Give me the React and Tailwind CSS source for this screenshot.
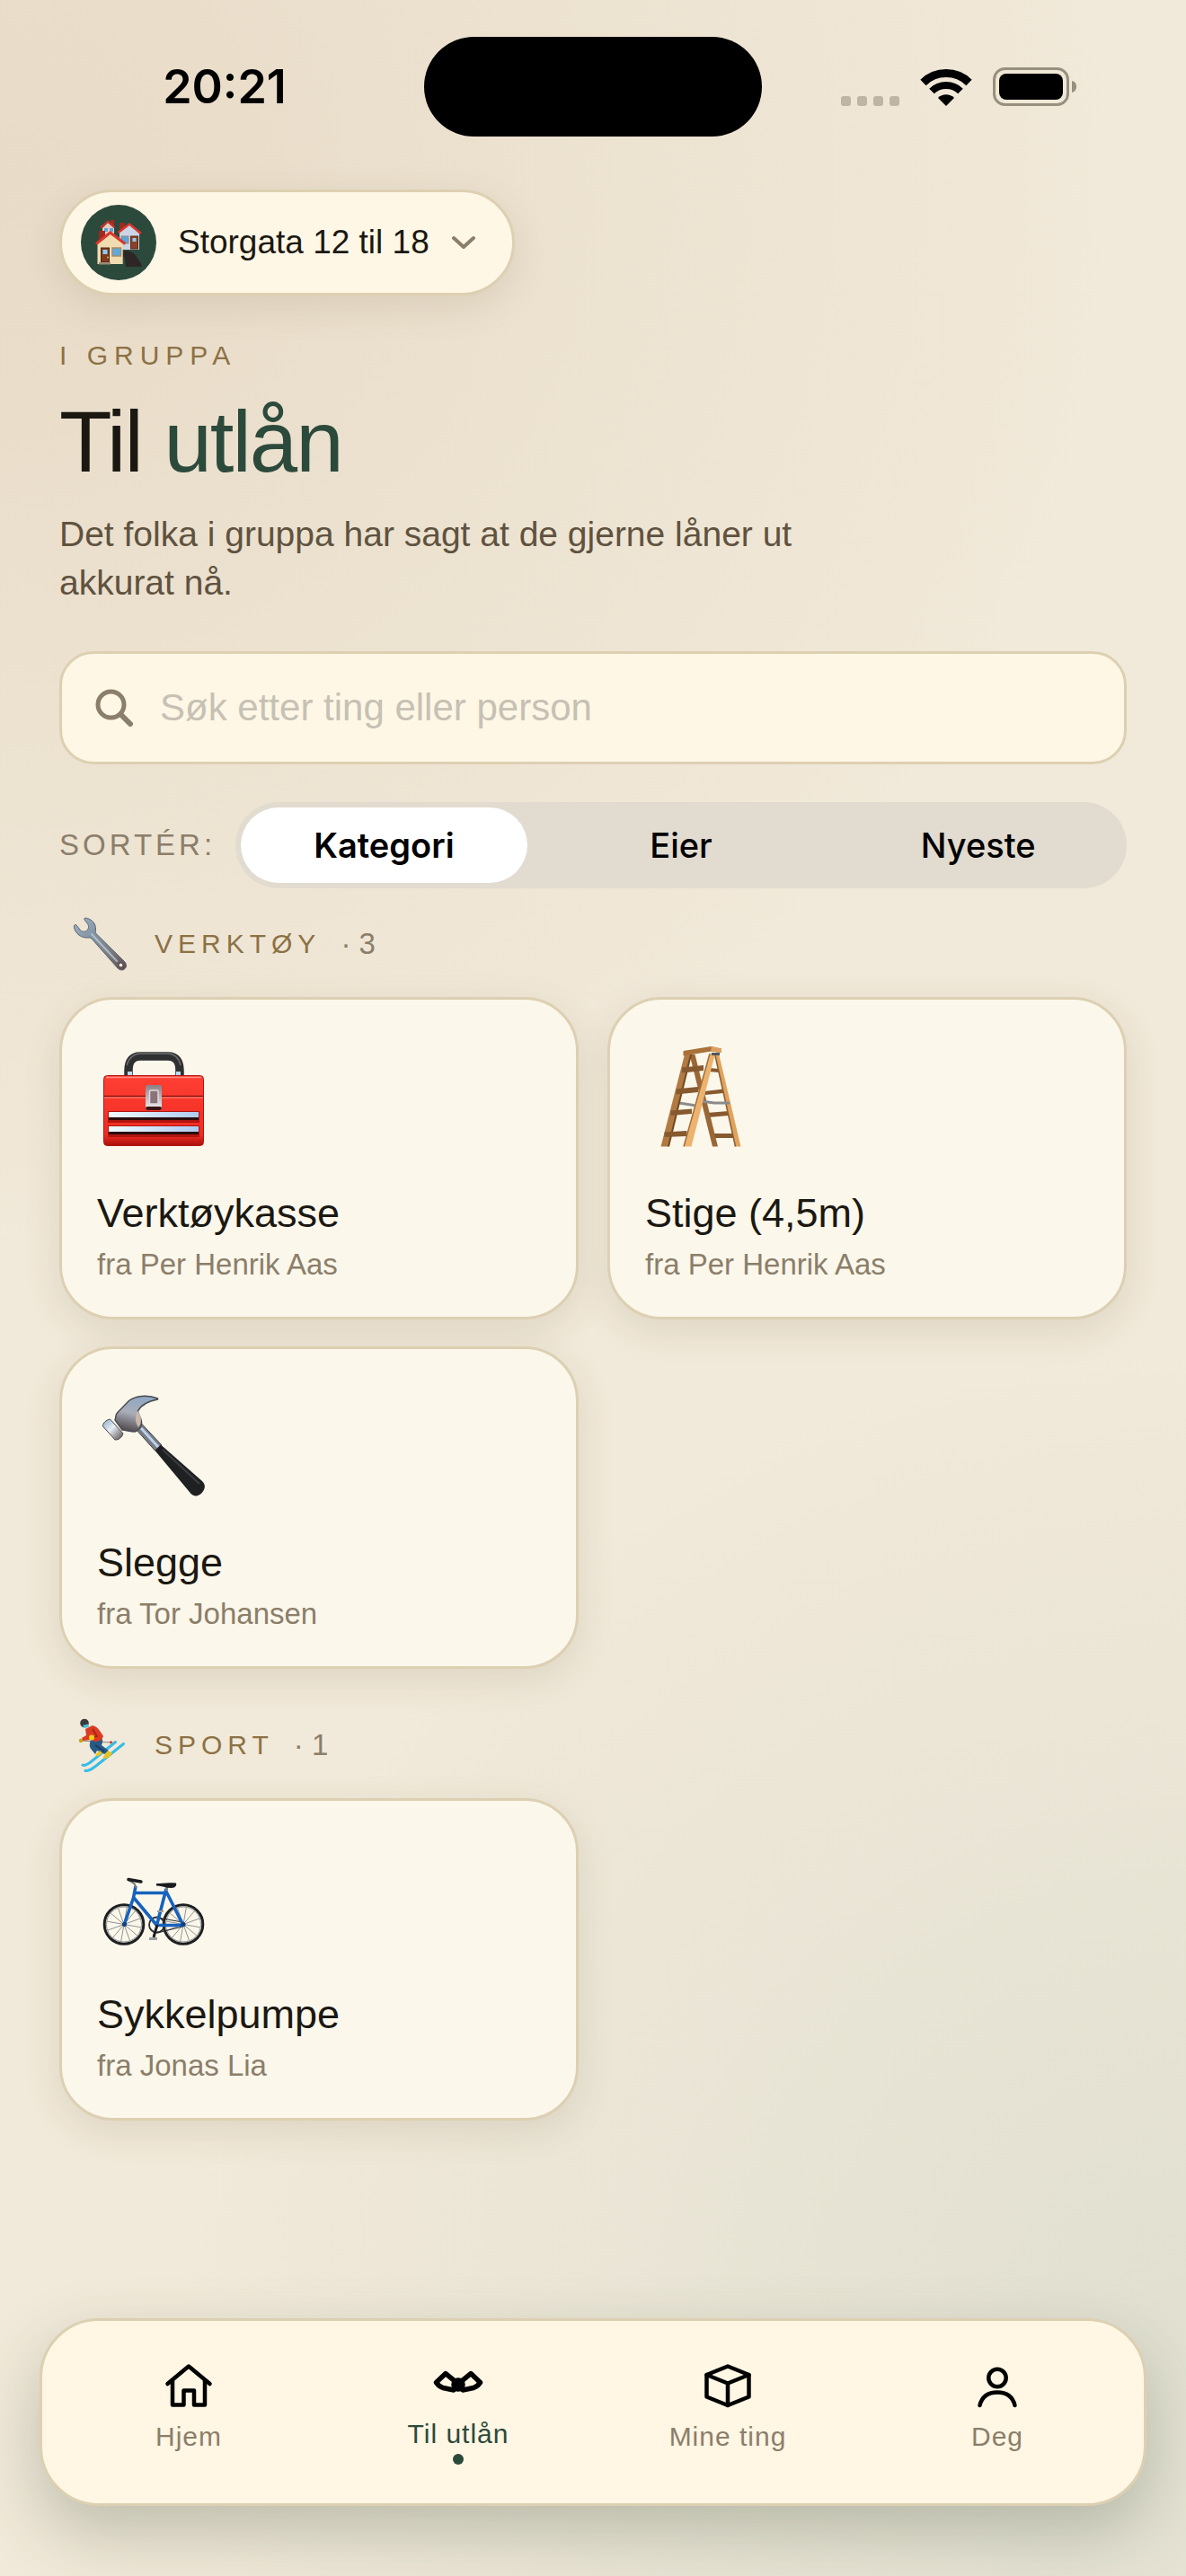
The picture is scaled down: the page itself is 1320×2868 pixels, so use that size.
import { useState } from "react";

const sans = "font-['Liberation_Sans',Arial,sans-serif]";
const inter = "font-['Inter',sans-serif]";

const HousesIcon = () => (
    <svg viewBox="0 0 84 84" className="w-[84px] h-[84px] shrink-0 rounded-full bg-[#2c4a3b]" aria-hidden="true">
        <path d="M48 51C54 51 59 53 62 58C65 62 67 65 68 69H50C50 64 49 59 47 56Z" fill="#2e2526" />
        <rect x="33" y="17" width="4" height="6" fill="#a52a20" />
        <path d="M24 26L30 20L37 26V36H24Z" fill="#ecc9c1" />
        <rect x="26" y="26" width="4" height="4" fill="#5aa7dc" />
        <rect x="32" y="26" width="4" height="4" fill="#5aa7dc" />
        <path d="M22 25.500L30 18.500L37.500 25" fill="none" stroke="#c9302a" strokeWidth="2" />
        <rect x="43" y="20" width="6" height="9" fill="#9c2a20" />
        <path d="M43 31L54 22L65 32V50H43Z" fill="#ccd4e6" />
        <rect x="45" y="35" width="8" height="8" fill="#5aa7dc" stroke="#9a8474" strokeWidth="1" />
        <rect x="55.500" y="35" width="8" height="14" fill="#8a4125" stroke="#5e2a18" strokeWidth="1" />
        <rect x="57.500" y="37" width="4" height="4" fill="#8ecbee" />
        <path d="M41.500 31L54 21.500L67 32" fill="none" stroke="#d8352c" strokeWidth="2.500" />
        <rect x="20" y="29" width="7" height="9" fill="#9c2a20" />
        <path d="M18.500 43L32.500 32L46.700 43V66H18.500Z" fill="#f0dcb0" />
        <rect x="22.500" y="48" width="9" height="16" fill="#7d3a20" stroke="#552312" strokeWidth="1" />
        <rect x="24.500" y="50" width="5" height="5" fill="#8ecbee" />
        <circle cx="30" cy="58.500" r="1" fill="#f5b82e" />
        <rect x="35" y="48" width="9.500" height="9" fill="#5aa9e0" stroke="#a88a66" strokeWidth="1.500" />
        <rect x="20" y="64" width="13" height="2.500" fill="#9b8c7c" />
        <path d="M17 43.500L32.700 31L49.300 43.500" fill="none" stroke="#d8352c" strokeWidth="3" />
    </svg>
);

const WrenchIcon = () => (
    <svg viewBox="0 0 60 60" className="w-[60px] h-[60px]" aria-hidden="true">
        <defs>
            <linearGradient id="wrench" x1="0" y1="0" x2="1" y2="1">
                <stop offset="0" stopColor="#9fb4c6" />
                <stop offset="0.350" stopColor="#8294a3" />
                <stop offset="0.650" stopColor="#7c8087" />
                <stop offset="1" stopColor="#5d4a4c" />
            </linearGradient>
        </defs>
        <path
            d="M13 1C20 2 25 7 24.500 14C24.500 16 24 17 25 18.500L56 49C59 52 59.500 55 57 57.500C54.500 60 51 59 49 57L20 24C18 22.500 17 23 14 23C6 22.500 0 16 0.500 9.500C1 8.500 2 8 3 9L7 14C9 16.500 12 17 14.500 15C17 13 17 10 15.500 7.500L12 3C11.500 2 12 1 13 1Z"
            fill="url(#wrench)"
            stroke="#5c6670"
            strokeWidth="1"
        />
        <path d="M20 19L48 49" stroke="#c6d2dc" strokeWidth="2" strokeLinecap="round" opacity="0.700" />
        <circle cx="52.500" cy="53.500" r="2.500" fill="#f1e9d9" stroke="#4a3b3d" strokeWidth="1" />
    </svg>
);

const SkierIcon = () => (
    <svg viewBox="0 0 60 60" className="w-[60px] h-[60px]" aria-hidden="true">
        <path d="M10 52C12 53.500 15 51.500 18 49.500L46.500 26.500" fill="none" stroke="#35bce8" strokeWidth="3" strokeLinecap="round" />
        <path d="M13 58.500C17 59 21 56 25 53L55.500 28.500" fill="none" stroke="#35bce8" strokeWidth="3" strokeLinecap="round" />
        <path d="M8 25L41 27" stroke="#8a8580" strokeWidth="1" />
        <circle cx="41.500" cy="26.700" r="1.500" fill="#d23a2e" />
        <path d="M19 24L31 22C33 25 32 28 31 30L39 36L34.500 40L26 36L24 40L19 34C17 31 18 27 19 24Z" fill="#285a86" />
        <path d="M24 30L34 37" stroke="#173c62" strokeWidth="2" />
        <path d="M24 41L29 36L32 39L27 42.500Z" fill="#e9c21c" />
        <path d="M33 43L38 36L43 39L40 43L34 45.500Z" fill="#e9c21c" />
        <path d="M13 12L21 8C25 9 27 11 29 14L33 20L31 24C26 27 22 26 19 24L10 25L9 22L14 19Z" fill="#dc3a22" />
        <path d="M21 12L26 20L18 22" fill="none" stroke="#a3220f" strokeWidth="1.500" />
        <circle cx="20" cy="21.500" r="3" fill="#f4cf1e" />
        <circle cx="8" cy="25" r="2.200" fill="#c9a413" />
        <circle cx="12" cy="5.500" r="4.800" fill="#3a3b3e" />
        <path d="M10 8L16 6.500L17 10L12 11Z" fill="#4cc3d9" />
    </svg>
);

const ToolboxIcon = () => (
    <svg viewBox="0 0 114 114" className="w-[114px] h-[114px]" aria-hidden="true">
        <defs>
            <linearGradient id="box" x1="0" y1="0" x2="0" y2="1">
                <stop offset="0" stopColor="#ff3f34" />
                <stop offset="0.850" stopColor="#f02c22" />
                <stop offset="1" stopColor="#a80f0a" />
            </linearGradient>
            <linearGradient id="tray" x1="0" y1="0" x2="1" y2="0">
                <stop offset="0" stopColor="#f1fbff" />
                <stop offset="1" stopColor="#aecbf2" />
            </linearGradient>
            <linearGradient id="latch" x1="0" y1="0" x2="0" y2="1">
                <stop offset="0" stopColor="#8d7f84" />
                <stop offset="1" stopColor="#f3f3f5" />
            </linearGradient>
        </defs>
        <path d="M29 35V28Q29 12 42 12H73Q86 12 86 28V35" fill="none" stroke="#2f3031" strokeWidth="9.500" />
        <path d="M27 22Q31 9.500 42 9H73Q84 9.500 87 22" fill="none" stroke="#6a6c6e" strokeWidth="1.500" />
        <rect x="28" y="29" width="5" height="5" fill="#b9d9f5" />
        <rect x="82" y="29" width="5" height="5" fill="#b9d9f5" />
        <rect x="1.500" y="33.500" width="111" height="78" rx="4" fill="url(#box)" stroke="#b5150f" strokeWidth="1" />
        <path d="M4 35.500H110" stroke="#ff8d82" strokeWidth="1.500" />
        <path d="M2 56.500H112" stroke="#8c120d" strokeWidth="1.500" />
        <path d="M2 58H112" stroke="#ff8f86" strokeWidth="1" />
        <rect x="48" y="44" width="18" height="28" rx="2" fill="url(#latch)" />
        <rect x="48" y="68" width="18" height="4" rx="2" fill="#3a1414" />
        <rect x="52.500" y="50" width="9.500" height="15" rx="1" fill="#8b7378" stroke="#dcdbe0" strokeWidth="1.500" />
        <rect x="6" y="73" width="102" height="13" fill="#b01510" />
        <rect x="7" y="74" width="100" height="6" fill="url(#tray)" />
        <rect x="7" y="80" width="100" height="3" fill="#2a0c0c" />
        <rect x="6" y="89" width="102" height="13" fill="#b01510" />
        <rect x="7" y="90" width="100" height="6" fill="url(#tray)" />
        <rect x="7" y="96" width="100" height="3" fill="#2a0c0c" />
    </svg>
);

const LadderIcon = () => (
    <svg viewBox="0 0 114 114" className="w-[114px] h-[114px]" aria-hidden="true">
        <g fill="#86592f">
            <path d="M65 25L76 26V30L65 29Z" />
            <path d="M60 51L81 48.500V53L61 55Z" />
            <path d="M63 75L87 73V78L64 80Z" />
            <path d="M68 98H93V103L69 103Z" />
            <path d="M43.500 10H49.500L75 112.500H69Z" fill="#9a6735" />
        </g>
        <path d="M71.500 9H76L100.500 112.500H94.500Z" fill="#e0a35e" />
        <path d="M71.500 9L94.500 112.500" stroke="#8b5c30" strokeWidth="1.500" />
        <path d="M32 64L48 66.500M56 62L71 64L87 64" fill="none" stroke="#8a8b8c" strokeWidth="3" strokeLinecap="round" />
        <path d="M38 10H45L20 112.500H11.500Z" fill="#b27a43" />
        <path d="M45 10L20 112.500" stroke="#704821" strokeWidth="2" />
        <g fill="#87592f">
            <path d="M35 24.500L59 22V28L35 30.500Z" />
            <path d="M28.500 48.500L53 46V52L28.500 54.500Z" />
            <path d="M22.500 72.500L46 70.500V76L22.500 78Z" />
            <path d="M15.500 96.500L40.500 95V101L15.500 102Z" />
        </g>
        <path d="M66 9H72L45.500 112.500H37Z" fill="#edb26e" />
        <path d="M66 9L37 112.500" stroke="#a06c38" strokeWidth="1.500" />
        <path d="M36.500 6L67.500 1L79 3.500V8L67.500 6.500L36.500 11.500Z" fill="#a97138" />
        <path d="M67.500 1L79 3.500V8L67.500 6.500Z" fill="#dca062" />
        <rect x="68" y="8" width="9" height="3" fill="#4f5860" />
    </svg>
);

const HammerIcon = () => (
    <svg viewBox="0 0 114 114" className="w-[114px] h-[114px]" aria-hidden="true">
        <defs>
            <linearGradient id="steel" x1="0.600" y1="0" x2="0.300" y2="1">
                <stop offset="0" stopColor="#8ea9c4" />
                <stop offset="0.500" stopColor="#a9adb8" />
                <stop offset="1" stopColor="#4d4649" />
            </linearGradient>
            <linearGradient id="face" x1="0" y1="0" x2="1" y2="1">
                <stop offset="0" stopColor="#86aacb" />
                <stop offset="0.450" stopColor="#e8eef3" />
                <stop offset="1" stopColor="#4e4547" />
            </linearGradient>
        </defs>
        <path d="M37 38L43.500 32L66 56L58.500 62Z" fill="#777c86" stroke="#474347" strokeWidth="1" />
        <path d="M43 37L62 58" stroke="#bdd2e8" strokeWidth="3" />
        <path d="M65 55.500L111 96C115 100 114.500 104 111.500 108C108 113 102 114 98.500 110L58.500 62Z" fill="#1f2022" />
        <path d="M67 61L108 99" stroke="#3b3d40" strokeWidth="2" />
        <path
            d="M61.500 4C50 -0.500 37 1 29.500 6.500L16.500 20C14 22 15.500 25 14 28L22 39C26 39 31 41 36 41C41 39 44 35 43.500 30C43 25 40 22 39.500 18C43 11 51 7 61.500 5Z"
            fill="url(#steel)"
            stroke="#494b51"
            strokeWidth="1.500"
        />
        <path d="M39 18C44 22 44 32 40 36C36 30 36 23 39 18Z" fill="#c7b8aa" />
        <path d="M8.500 27C4 28 0.500 31 0.500 35L14 50C18 50.500 22 47 23 43Z" fill="url(#face)" stroke="#4a474b" strokeWidth="1" />
    </svg>
);

const Wheel = ({ cx }) => (
    <g>
        <circle cx={cx} cy="86.500" r="21.800" fill="none" stroke="#1d1f21" strokeWidth="3" />
        <circle cx={cx} cy="86.500" r="19.500" fill="none" stroke="#8d9092" strokeWidth="1" />
        {[10, 40, 70, 100, 130, 160].map((angle) => (
            <path key={angle} d={`M${cx - 19} 86.5H${cx + 19}`} stroke="#6f7274" strokeWidth="0.700" transform={`rotate(${angle} ${cx} 86.5)`} />
        ))}
    </g>
);

const BikeIcon = () => (
    <svg viewBox="0 0 114 114" className="w-[114px] h-[114px]" aria-hidden="true">
        <Wheel cx={24} />
        <Wheel cx={90} />
        <circle cx="60.500" cy="87" r="8.500" fill="none" stroke="#2b2d2f" strokeWidth="1.800" />
        <path d="M61 79L89 84M61 96L89 89" stroke="#2b2d2f" strokeWidth="1.200" />
        <path d="M37 44L34.500 57L24.500 86M35.500 51.500H71M35 57L60.500 87.500H90L71 50M71 47L60.500 87.500" fill="none" stroke="#1762bd" strokeWidth="3.600" strokeLinejoin="round" />
        <circle cx="24.500" cy="86.500" r="2.500" fill="#123f7e" />
        <circle cx="90" cy="86.500" r="2.500" fill="#123f7e" />
        <path d="M28 36.500C34 41 37 40 37 46" fill="none" stroke="#75787a" strokeWidth="2" />
        <path d="M29 36.500L43 39" stroke="#1b1c1e" strokeWidth="3.500" strokeLinecap="round" />
        <path d="M71.500 44V49" stroke="#808385" strokeWidth="3" />
        <path d="M60 41C66 41 72 39.500 82 40.500C83 43 81 46 77 46C70 46 65 43 60 43.500Z" fill="#1b1c1e" />
        <path d="M61 87L57 101" stroke="#1b1c1e" strokeWidth="3" />
        <rect x="52" y="101" width="9" height="3" fill="#9b9d9f" />
        <rect x="61" y="71" width="7" height="2" fill="#9b9d9f" />
    </svg>
);

const SignalIcons = () => (
    <div className="flex items-end gap-[23px]">
        <svg viewBox="0 0 65 11" className="w-[65px] h-[11px]" fill="#bdb5a6" aria-hidden="true">
            <rect x="0" width="11" height="11" rx="3" />
            <rect x="18" width="11" height="11" rx="3" />
            <rect x="36" width="11" height="11" rx="3" />
            <rect x="54" width="11" height="11" rx="3" />
        </svg>
        <svg viewBox="0 0 58 42" className="w-[58px] h-[42px]" fill="none" stroke="#000" aria-hidden="true">
            <path d="M3.500 16A36.500 36.500 0 0 1 54.500 16" strokeWidth="9" />
            <path d="M13 25.500A23 23 0 0 1 45 25.500" strokeWidth="8" />
            <path d="M29 42L20 33A12.700 12.700 0 0 1 38 33Z" fill="#000" stroke="none" />
        </svg>
        <svg viewBox="0 0 93 43" className="w-[93px] h-[43px]" aria-hidden="true">
            <rect x="1.500" y="1.500" width="82" height="40" rx="12" fill="none" stroke="#97907f" strokeWidth="3" />
            <rect x="7" y="7" width="71" height="29" rx="8" />
            <path d="M88 15C92 16 93 19 93 21.500S92 27 88 28Z" fill="#97907f" />
        </svg>
    </div>
);

const lineIcon = { fill: "none", stroke: "#000", strokeWidth: 4.5, strokeLinecap: "round", strokeLinejoin: "round" };

const HomeIcon = () => (
    <svg viewBox="0 0 60 60" className="w-[60px] h-[60px]" {...lineIcon} aria-hidden="true">
        <path d="M6.500 28L30 8.500L53.500 28" />
        <path d="M12 24V51.500H24.500V35.500H36V51.500H48V24" />
    </svg>
);

const BowIcon = () => (
    <svg viewBox="0 0 60 57" className="w-[60px] h-[57px]" {...lineIcon} strokeWidth="5.500" aria-hidden="true">
        <path d="M16 16.500L5.500 26.500Q8 30.500 13 32.500L25 35L30 28Z" />
        <path d="M44 16.500L54.500 26.500Q52 30.500 47 32.500L35 35L30 28Z" />
        <circle cx="30" cy="29" r="5" fill="#000" />
    </svg>
);

const CubeIcon = () => (
    <svg viewBox="0 0 60 60" className="w-[60px] h-[60px]" {...lineIcon} aria-hidden="true">
        <path d="M30 8.500L53.500 18V42.500L30 52L6.500 42.500V18Z" />
        <path d="M6.500 18L30 27.500L53.500 18M30 27.500V52" />
    </svg>
);

const PersonIcon = () => (
    <svg viewBox="0 0 60 60" className="w-[60px] h-[60px]" {...lineIcon} aria-hidden="true">
        <circle cx="30" cy="21.500" r="9.700" />
        <path d="M10.500 52C13 42 20.500 37.500 30 37.500S47 42 49.500 52" />
    </svg>
);

const groups = [
    {
        name: "Verktøy",
        icon: <WrenchIcon />,
        items: [
            { title: "Verktøykasse", owner: "Per Henrik Aas", icon: <ToolboxIcon /> },
            { title: "Stige (4,5m)", owner: "Per Henrik Aas", icon: <LadderIcon /> },
            { title: "Slegge", owner: "Tor Johansen", icon: <HammerIcon /> },
        ],
    },
    {
        name: "Sport",
        icon: <SkierIcon />,
        items: [{ title: "Sykkelpumpe", owner: "Jonas Lia", icon: <BikeIcon /> }],
    },
];

const tabs = [
    { label: "Hjem", icon: <HomeIcon /> },
    { label: "Til utlån", icon: <BowIcon />, active: true },
    { label: "Mine ting", icon: <CubeIcon /> },
    { label: "Deg", icon: <PersonIcon /> },
];

const ItemCard = ({ item }) => (
    <button className="flex flex-col items-start text-left rounded-[60px] border-3 border-[#ddd0b2] bg-[#fbf7eb] pl-[39px] pr-6 pt-[51px] pb-[37px] shadow-[0_12px_42px_rgba(90,75,45,0.12)]">
        <span className="ml-[6px]">{item.icon}</span>
        <span className="mt-[46px] text-[45px] leading-[54px] text-[#1b1812]">{item.title}</span>
        <span className="mt-[9px] text-[33px] leading-[42px] text-[#8b7e6a]">fra {item.owner}</span>
    </button>
);

const Group = ({ group }) => (
    <section>
        <div className="flex items-center pl-4">
            {group.icon}
            <h2 className="ml-[30px] text-[30px] leading-9 tracking-[6px] uppercase text-[#8c7144]">{group.name}</h2>
            <span className="ml-[22px] text-[33px] leading-9 text-[#8b7e6a]">· {group.items.length}</span>
        </div>
        <div className="mt-[29px] grid grid-cols-2 gap-x-8 gap-y-[30px]">
            {group.items.map((item) => (
                <ItemCard key={item.title} item={item} />
            ))}
        </div>
    </section>
);

const App = () => {
    const [sort, setSort] = useState("Kategori");
    const [query, setQuery] = useState("");

    return (
        <div className={`${sans} min-h-screen flex flex-col bg-[#f1e9d9] bg-[radial-gradient(ellipse_95%_42%_at_0%_7%,#e8dbc7_0%,transparent_100%),radial-gradient(ellipse_85%_38%_at_100%_90%,#e1e0d1_0%,transparent_100%)]`}>
            <header className="grid grid-cols-[1fr_376px_1fr] items-center pt-[41px]">
                <p className={`${inter} pl-7 text-center text-[52px] leading-[60px] font-semibold text-black`}>20:21</p>
                <div className="h-[111px] rounded-full bg-black" />
                <div className="flex justify-center pr-[34px]">
                    <SignalIcons />
                </div>
            </header>

            <main className="px-[66px] pt-[59px] pb-16">
                <button className="flex items-center rounded-full border-3 border-[#ddd0b2] bg-[#fff7e5] py-[14px] pl-[21px] pr-10 shadow-[0_12px_42px_rgba(90,75,45,0.12)]">
                    <HousesIcon />
                    <span className="ml-6 text-[37px] leading-[42px] text-[#1b1812]">Storgata 12 til 18</span>
                    <svg viewBox="0 0 28 16" className="ml-6 w-7 h-4" fill="none" stroke="#8b7e6a" strokeWidth="4" strokeLinecap="round" strokeLinejoin="round" aria-hidden="true">
                        <path d="M3 3L14 13L25 3" />
                    </svg>
                </button>

                <p className="mt-[49px] text-[30px] leading-9 tracking-[7px] uppercase text-[#8c7144]">I gruppa</p>
                <h1 className="mt-[22px] text-[96px] leading-[112px] tracking-[-2px] text-[#1b1812]">
                    Til <span className="text-[#2c4a3b]">utlån</span>
                </h1>
                <p className="mt-5 max-w-[880px] text-[39px] leading-[54px] text-[#5f5240]">
                    Det folka i gruppa har sagt at de gjerne låner ut akkurat nå.
                </p>

                <label htmlFor="search" className="mt-[49px] flex items-center gap-[30px] h-[126px] rounded-[38px] border-3 border-[#ddd0b2] bg-[#fff7e5] px-[37px]">
                    <svg viewBox="0 0 42 42" className="w-[42px] h-[42px] shrink-0" fill="none" stroke="#8b7e6a" strokeWidth="5" strokeLinecap="round" aria-hidden="true">
                        <circle cx="17.500" cy="17.500" r="14.500" />
                        <path d="M28.500 28.500L39 39" strokeWidth="6" />
                    </svg>
                    <input
                        id="search"
                        type="text"
                        aria-label="Søk etter ting eller person"
                        value={query}
                        onChange={(e) => setQuery(e.target.value)}
                        placeholder="Søk etter ting eller person"
                        className="flex-1 min-w-0 bg-transparent outline-none text-[42px] leading-[54px] text-[#1b1812] placeholder:text-[#c6c1b4]"
                    />
                </label>

                <div className="mt-[42px] mb-8 flex items-center gap-[22px]">
                    <span className="text-[33px] leading-[42px] tracking-[4px] uppercase text-[#8b7e6a]">Sortér:</span>
                    <div className="flex-1 grid grid-cols-3 h-24 rounded-full bg-[#e2dbd0]">
                        {["Kategori", "Eier", "Nyeste"].map((name) => (
                            <button
                                key={name}
                                aria-pressed={sort === name}
                                onClick={() => setSort(name)}
                                className={`${inter} m-[6px] rounded-full text-[38px] leading-[48px] text-black ${sort === name ? "bg-white font-semibold" : "font-medium"}`}>
                                {name}
                            </button>
                        ))}
                    </div>
                </div>

                <div className="flex flex-col gap-[55px]">
                    {groups.map((group) => (
                        <Group key={group.name} group={group} />
                    ))}
                </div>
            </main>

            <nav className="mt-auto mx-11 mb-[78px] grid grid-cols-4 h-[209px] rounded-[66px] border-3 border-[#ddd0b2] bg-[#fff6e4] px-[13px] pt-[42px] shadow-[0_30px_72px_rgba(54,74,50,0.27)]">
                {tabs.map((tab) => (
                    <a
                        key={tab.label}
                        href="#"
                        aria-current={tab.active ? "page" : undefined}
                        className={`flex flex-col items-center ${tab.active ? "text-[#2c4a3b]" : "text-[#8b7e6a]"}`}>
                        {tab.icon}
                        <span className="mt-[9px] text-[30px] leading-9 tracking-[1px]">{tab.label}</span>
                        {tab.active && <span className="mt-1 size-3 rounded-full bg-[#2c4a3b]" />}
                    </a>
                ))}
            </nav>
        </div>
    );
};

export default App;
